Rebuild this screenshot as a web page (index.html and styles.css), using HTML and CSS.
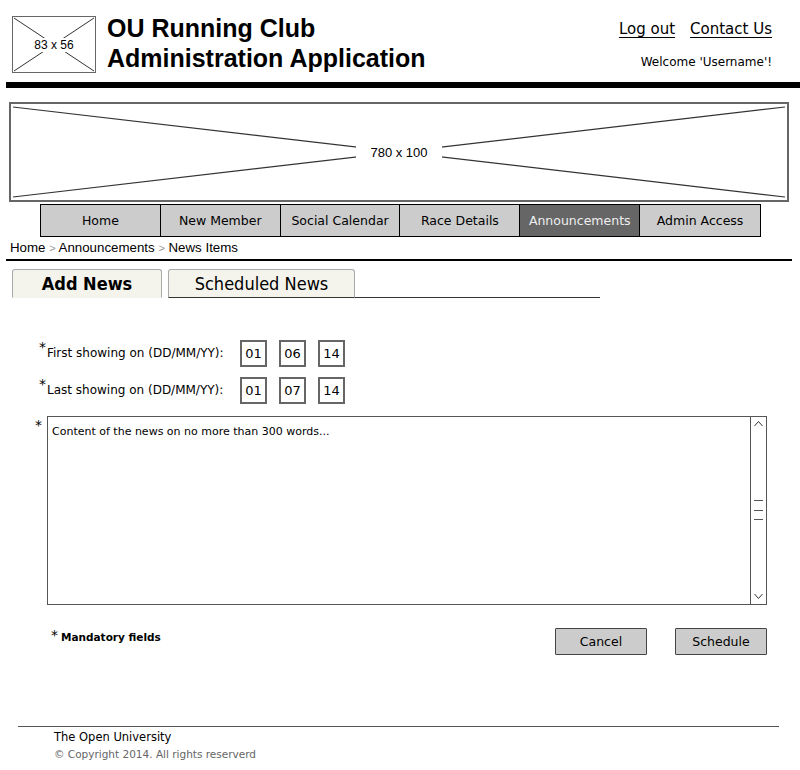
FILE: index.html
```html
<!DOCTYPE html>
<html>
<head>
<meta charset="utf-8">
<title>OU Running Club Administration Application</title>
<link rel="stylesheet" href="styles.css">
</head>
<body>
<header class="header">
  <div class="logo">
    <svg class="logo-x" width="84" height="57" viewBox="0 0 84 57"><line x1="2" y1="2" x2="82" y2="55" stroke="#333" stroke-width="1"/><line x1="82" y1="2" x2="2" y2="55" stroke="#333" stroke-width="1"/></svg>
    <span class="logo-text">83 x 56</span>
  </div>
  <h1 class="title">OU Running Club<br>Administration Application</h1>
  <div class="user">
    <div class="links"><a href="#">Log out</a><a href="#">Contact Us</a></div>
    <div class="welcome">Welcome 'Username'!</div>
  </div>
</header>
<div class="rule-thick"></div>
<div class="banner">
  <svg class="banner-x" width="776" height="96" viewBox="0 0 776 96"><line x1="2" y1="3" x2="774" y2="93" stroke="#333" stroke-width="1.2"/><line x1="774" y1="3" x2="2" y2="93" stroke="#333" stroke-width="1.2"/></svg>
  <span class="banner-text">780 x 100</span>
</div>
<nav class="nav">
  <a href="#" class="nav-item">Home</a>
  <a href="#" class="nav-item">New Member</a>
  <a href="#" class="nav-item">Social Calendar</a>
  <a href="#" class="nav-item">Race Details</a>
  <a href="#" class="nav-item active">Announcements</a>
  <a href="#" class="nav-item">Admin Access</a>
</nav>
<div class="crumbs">Home <span class="sep">&gt;</span> Announcements <span class="sep">&gt;</span> News Items</div>
<div class="rule-thin"></div>
<div class="tabs">
  <div class="tab active">Add News</div>
  <div class="tab">Scheduled News</div>
  <div class="tab-fill"></div>
</div>
<form class="form">
  <div class="row">
    <label class="label"><span class="star">*</span>First showing on (DD/MM/YY):</label>
    <div class="box">01</div><div class="box">06</div><div class="box">14</div>
  </div>
  <div class="row">
    <label class="label"><span class="star">*</span>Last showing on (DD/MM/YY):</label>
    <div class="box">01</div><div class="box">07</div><div class="box">14</div>
  </div>
  <div class="content-row">
    <span class="star star-ta">*</span>
    <div class="textarea">
      <div class="ta-text">Content of the news on no more than 300 words...</div>
      <div class="scroll">
        <svg width="15" height="186" viewBox="0 0 15 186"><polyline points="3.5,9 7.5,4.5 11.5,9" fill="none" stroke="#333" stroke-width="1"/><line x1="3" y1="83.5" x2="12" y2="83.5" stroke="#555"/><line x1="3" y1="93.5" x2="12" y2="93.5" stroke="#555"/><line x1="3" y1="102.5" x2="12" y2="102.5" stroke="#555"/><polyline points="3.5,177 7.5,181.5 11.5,177" fill="none" stroke="#333" stroke-width="1"/></svg>
      </div>
    </div>
  </div>
  <div class="actions">
    <div class="mandatory"><span class="star">*</span>Mandatory fields</div>
    <button type="button" class="btn btn-cancel">Cancel</button>
    <button type="button" class="btn">Schedule</button>
  </div>
</form>
<footer class="footer">
  <div class="org">The Open University</div>
  <div class="copy">© Copyright 2014. All rights reserverd</div>
</footer>
</body>
</html>
```
FILE: styles.css
```css
* { box-sizing: border-box; }
body {
  margin: 0;
  width: 800px;
  background: #fff;
  color: #000;
  font-family: "DejaVu Sans", sans-serif;
}
.header {
  display: flex;
  align-items: flex-start;
  height: 82px;
}
.logo {
  position: relative;
  width: 84px;
  height: 57px;
  margin: 16px 0 0 12px;
  border: 1px solid #666;
  display: flex;
  align-items: center;
  justify-content: center;
}
.logo-x { position: absolute; left: -1px; top: -1px; }
.logo-text {
  position: relative;
  font-family: "Liberation Sans", sans-serif;
  font-size: 12px;
  background: #fff;
  padding: 0 1px;
}
.title {
  margin: 13px 0 0 11px;
  font-family: "Liberation Sans", Arial, sans-serif;
  font-weight: bold;
  font-size: 25px;
  line-height: 30px;
}
.user {
  margin-left: auto;
  margin-right: 28px;
  margin-top: 20px;
  text-align: right;
}
.links { display: flex; gap: 15px; justify-content: flex-end; }
.links a {
  color: #000;
  font-size: 15px;
  text-decoration: underline;
  text-underline-offset: 3px;
}
.welcome {
  margin-top: 17px;
  font-size: 12px;
}
.rule-thick {
  height: 6px;
  background: #000;
  margin-left: 6px;
}
.banner {
  position: relative;
  width: 780px;
  height: 100px;
  margin: 14px 0 0 9px;
  border: 2px solid #666;
  display: flex;
  align-items: center;
  justify-content: center;
}
.banner-x { position: absolute; left: 0; top: 0; }
.banner-text {
  position: relative;
  font-family: "Liberation Sans Narrow", "Liberation Sans", sans-serif;
  font-size: 13px;
  background: #fff;
  padding: 0 14px;
}
.nav {
  display: flex;
  margin: 2px 0 0 40px;
  width: 721px;
  border: 1px solid #000;
}
.nav-item {
  width: 120px;
  height: 31px;
  background: #ccc;
  color: #000;
  text-decoration: none;
  font-size: 12.5px;
  display: flex;
  align-items: center;
  justify-content: center;
  border-right: 1px solid #000;
}
.nav-item:last-child { border-right: none; }
.nav-item.active { background: #666; color: #eee; }
.crumbs {
  margin: 2px 0 0 10px;
  font-family: "Liberation Sans", Arial, sans-serif;
  font-size: 13.3px;
  line-height: 17px;
}
.crumbs .sep { color: #999; font-size: 11px; }
.rule-thin {
  height: 2px;
  background: #000;
  margin: 2px 8px 0 6px;
}
.tabs {
  display: flex;
  align-items: flex-end;
  margin: 8px 0 0 12px;
  width: 588px;
  height: 29px;
}
.tab {
  height: 29px;
  background: #f4f4ec;
  border: 1px solid #aaa;
  border-bottom: 1px solid #333;
  border-radius: 3px 3px 0 0;
  font-family: "DejaVu Sans Condensed", "DejaVu Sans", sans-serif;
  font-size: 18px;
  display: flex;
  align-items: center;
  justify-content: center;
  width: 187px;
  margin-left: 6px;
}
.tab.active {
  width: 150px;
  margin-left: 0;
  font-weight: bold;
  border-bottom-color: #f4f4ec;
}
.tab-fill {
  flex: 1;
  border-bottom: 1px solid #333;
}
.form {
  margin: 42px 0 0 0;
}
.row {
  display: flex;
  align-items: flex-start;
  margin-left: 39px;
  margin-bottom: 10px;
}
.label {
  width: 201px;
  font-size: 12px;
  padding-top: 6px;
  display: flex;
  align-items: flex-start;
}
.star {
  font-size: 14px;
  line-height: 10px;
  margin-right: 1px;
  margin-top: -4px;
}
.box {
  width: 27px;
  height: 27px;
  border: 2px solid #666;
  font-size: 13px;
  display: flex;
  align-items: center;
  justify-content: center;
  margin-right: 12px;
}
.content-row {
  display: flex;
  margin: 12px 0 0 35px;
}
.star-ta { margin-top: 4px; margin-right: 5px; }
.textarea {
  display: flex;
  width: 720px;
  height: 189px;
  border: 1.5px solid #555;
}
.ta-text {
  flex: 1;
  font-size: 11px;
  padding: 8px 0 0 4px;
}
.scroll {
  width: 16px;
  border-left: 1px solid #555;
}
.scroll svg { display: block; }
.actions {
  display: flex;
  align-items: flex-start;
  margin: 23px 0 0 51px;
}
.mandatory {
  font-size: 10.5px;
  font-weight: bold;
  display: flex;
  padding-top: 3px;
}
.mandatory .star { margin-top: -1px; margin-right: 3px; font-weight: normal; }
.btn {
  width: 92px;
  height: 27px;
  background: #ccc;
  border: 1.5px solid #444;
  border-radius: 1px;
  font-family: "DejaVu Sans", sans-serif;
  font-size: 12.5px;
  color: #000;
  padding: 0;
}
.btn-cancel { margin-left: auto; }
.btn + .btn { margin-left: 28px; }
.actions .btn:last-child { margin-right: 33px; }
.footer {
  margin: 71px 0 0 18px;
  width: 761px;
  border-top: 1.5px solid #555;
  padding: 2px 0 0 36px;
}
.org { font-size: 11.5px; line-height: 16px; }
.copy { font-size: 10.5px; color: #666; line-height: 16px; margin-top: 1px; }
```
